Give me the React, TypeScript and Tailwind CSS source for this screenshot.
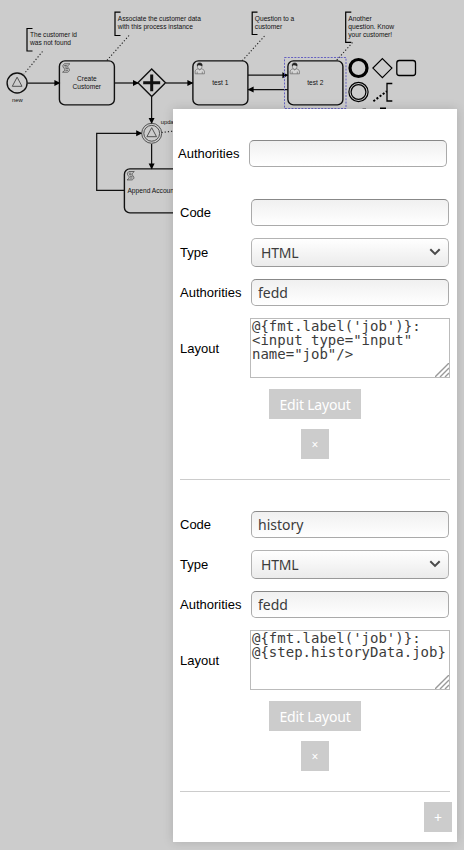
import React from "react";

function Lines({ x, y, lines, anchor = "start", size = 6.9 }: { x: number; y: number; lines: [string, number][]; anchor?: "start" | "middle"; size?: number }) {
  return (
    <g fill="#111" fontSize={size} textAnchor={anchor}>
      {lines.map(([line, width], i) => (
        <text key={line} x={x} y={y + i * 8} textLength={width} lengthAdjust="spacingAndGlyphs">
          {line}
        </text>
      ))}
    </g>
  );
}

function Script({ x, y }: { x: number; y: number }) {
  return (
    <g transform={`translate(${x} ${y})`} fill="none" stroke="#444" strokeWidth="0.75">
      <path d="M2.3 .5H7.6C6.2 1.6 5.4 2.5 5.5 3.4 5.6 4.7 7.4 5.3 7.2 6.9 7.1 7.8 6.3 8.4 5.4 8.9H.4C1.6 8 2.6 7.3 2.5 6.3 2.4 5 .7 4.4.7 2.8.7 1.8 1.3 1.1 2.3.5Z" />
      <path d="M2 2.2H4.6M2.3 3.7H4.8M3.2 5.3H5.9M3.2 7H5.9" />
    </g>
  );
}

function User({ x, y }: { x: number; y: number }) {
  return (
    <g transform={`translate(${x} ${y})`} stroke="#555" strokeWidth="0.6" fill="#d6d6d6">
      <path d="M.4 11V8.3C.7 6.9 2 6.4 3.3 6L4.8 7.1 6.4 6C8 6.4 9.4 7.1 9.6 8.3V11ZM2.4 10.9V8.8M7.5 10.9V8.8" />
      <path d="M2.6 3.3C2.6 5 3.6 6.6 4.9 6.6S7.2 5 7.2 3.3C7.2 1.6 6.2.6 4.9.6S2.6 1.6 2.6 3.3Z" />
      <path d="M2.6 3.1C2.1.9 3.4.2 4.9.2S7.7.9 7.2 3.1C6.2 2 5 2.8 3.8 2.1Z" fill="#222" stroke="#222" />
    </g>
  );
}

function Diagram() {
  return (
    <svg width="464" height="850" viewBox="0 0 464 850" className="block font-['Liberation_Sans',Arial,sans-serif]">
      <defs>
        <marker id="arrow" markerUnits="userSpaceOnUse" markerWidth="7" markerHeight="7" refX="5.6" refY="3" orient="auto">
          <path d="M0 0 6 3 0 6Z" />
        </marker>
      </defs>

      <g fill="none" stroke="#000" strokeWidth="1.2">
        <path d="M32.5 28.5H27V51H32.5" />
        <path d="M120.5 12.2H115V35.5H120.5" />
        <path d="M257.5 12.2H252.2V34.5H257.5" />
        <path d="M351.3 12.2H345.7V42.3H351.3" />
      </g>
      <g fill="none" stroke="#222" strokeWidth="1.1" strokeDasharray="1.2 2">
        <path d="M42.5 51.5 24 74" />
        <path d="M129 35.5 106 61.5" />
        <path d="M264.5 36 242 61" />
        <path d="M352.5 42.5 336 61" />
        <path d="M161.5 132.5 174 131" />
      </g>
      <Lines x={30} y={36.9} lines={[["The customer id", 47], ["was not found", 41]]} />
      <Lines x={117.8} y={21} lines={[["Associate the customer data", 83], ["with this process instance", 75]]} />
      <Lines x={254.8} y={21} lines={[["Question to a", 39.5], ["customer", 27.5]]} />
      <Lines x={348.2} y={21} lines={[["Another", 23.5], ["question. Know", 46], ["your customer!", 44]]} />

      <g fill="none" stroke="#111" strokeWidth="1.25" markerEnd="url(#arrow)">
        <path d="M27.5 83H60" />
        <path d="M115 83H138.5" />
        <path d="M166 83H193" />
        <path d="M248 75.2H288" />
        <path d="M288 89.5H248" />
        <path d="M151.6 97V123.5" />
        <path d="M151.6 144V169" />
        <path d="M124 190.3H96.7V133.3H141.8" />
      </g>

      <g fill="none" stroke="#111" strokeWidth="1.4">
        <rect x="59.4" y="60.9" width="55" height="44" rx="5.5" />
        <rect x="192.9" y="60.9" width="55" height="44" rx="5.5" />
        <rect x="287.9" y="60.9" width="55" height="44" rx="5.5" />
        <rect x="124.4" y="168.9" width="55" height="44" rx="5.5" />
        <circle cx="17.1" cy="83" r="10" />
        <path d="M151.7 69 165.5 82.8 151.7 96.6 137.9 82.8Z" />
        <path d="M151.7 74.5V91.3M143.2 82.8H160.2" strokeWidth="3" />
      </g>
      <g fill="none" stroke="#444" strokeWidth="0.9">
        <path d="M17.1 77.2 22 86.3H12.3Z" />
        <circle cx="151.7" cy="133.3" r="10" />
        <circle cx="151.7" cy="133.3" r="7.9" />
        <path d="M151.7 127.7 156.5 136.7H146.9Z" />
      </g>
      <rect x="284.5" y="57.5" width="61.5" height="51" fill="none" stroke="#6460c0" strokeDasharray="2 1.3" />
      <Script x={62.2} y={63.3} />
      <Script x={126.7} y={171} />
      <User x={194.8} y={62.8} />
      <User x={289.8} y={62.8} />
      <Lines x={86.8} y={81} anchor="middle" lines={[["Create", 19.5], ["Customer", 28.5]]} />
      <Lines x={220.3} y={85} anchor="middle" lines={[["test 1", 16.2]]} />
      <Lines x={315.3} y={85} anchor="middle" lines={[["test 2", 16.2]]} />
      <Lines x={17.3} y={102} anchor="middle" size={6} lines={[["new", 10.7]]} />
      <Lines x={160.7} y={124.2} size={6} lines={[["updated", 21]]} />
      <Lines x={127.4} y={193} lines={[["Append Account", 48.5]]} />

      <g fill="none" stroke="#000">
        <circle cx="358.5" cy="68" r="8.5" strokeWidth="3.2" />
        <path d="M382.4 58.6 391.9 68.1 382.4 77.6 372.9 68.1Z" strokeWidth="1.2" />
        <rect x="396.8" y="60.5" width="18.7" height="15" rx="2.5" strokeWidth="1.3" />
        <circle cx="358.5" cy="92" r="9.6" strokeWidth="1.2" />
        <circle cx="358.5" cy="92" r="7.4" strokeWidth="1.2" />
        <path d="M373.4 101.2 386.8 91.2" strokeWidth="2" strokeDasharray="2.1 1.8" />
        <path d="M392.3 83.5H387V101H392.3" strokeWidth="1.3" />
        <path d="M380 108.3H386" strokeWidth="1.6" />
        <path d="M362.5 108.5H366" stroke="#888" />
      </g>
    </svg>
  );
}

const inputStyle = "block h-[27px] w-[198px] rounded-[5px] border border-[#aaa] border-t-[#888] bg-linear-to-b from-[#f0f0f0] to-white px-[6px] font-['Noto_Sans','Open_Sans',sans-serif] text-[14px] leading-[25px] text-[#3c3c3c] outline-none";
const buttonStyle = "flex h-[30px] items-center justify-center bg-[#cccccc] font-['Noto_Sans','Open_Sans',sans-serif] text-white";

function Field({ label, children }: { label: string; children: React.ReactNode }) {
  return (
    <div className="flex items-center">
      <span className="w-[71px] shrink-0">{label}</span>
      {children}
    </div>
  );
}

function FormSection({ code, layout }: { code: string; layout: string }) {
  return (
    <section className="flex h-[281px] w-[270px] flex-col border-b border-[#cccccc]">
      <Field label="Code">
        <input className={inputStyle} defaultValue={code} />
      </Field>
      <div className="mt-3">
        <Field label="Type">
          <div className="flex h-[29px] w-[198px] items-center justify-between rounded-[5px] border border-[#b3b3b3] border-b-[#999] bg-linear-to-b from-white to-[#ebebeb] pr-[7px] pl-[9px] font-['Noto_Sans','Open_Sans',sans-serif] text-[14px] text-[#3c3c3c]">
            <span className="tracking-[-0.2px]">HTML</span>
            <svg width="12" height="8" viewBox="0 0 12 8" fill="none" stroke="#4a4a4a" strokeWidth="2" className="-mt-[2px]">
              <path d="M1.3 1.2 6 5.9 10.7 1.2" />
            </svg>
          </div>
        </Field>
      </div>
      <div className="mt-3">
        <Field label="Authorities">
          <input className={inputStyle} defaultValue="fedd" />
        </Field>
      </div>
      <div className="mt-3 flex items-center">
        <span className="w-[70px] shrink-0">Layout</span>
        <div className="relative h-[60px] w-[200px] border border-[#bbb] px-px font-['DejaVu_Sans_Mono',monospace] text-[14px] leading-[14px] whitespace-pre text-[#3c3c3c]">
          {layout}
          <svg className="absolute right-0 bottom-0" width="14" height="14" viewBox="0 0 14 14" fill="none" stroke="#999" strokeWidth="1.4">
            <path d="M0 14 14 0M5 14 14 5M10 14 14 10" />
          </svg>
        </div>
      </div>
      <button className={`${buttonStyle} mt-[11px] w-[92px] self-center text-[14px]`}>
        <span className="tracking-[-0.2px]">Edit Layout</span>
      </button>
      <button className={`${buttonStyle} mt-[10px] w-[28px] self-center text-[12px]`}>×</button>
    </section>
  );
}

export default function App() {
  return (
    <main className="relative h-[850px] w-[464px] overflow-hidden bg-[#cccccc]">
      <Diagram />
      <aside className="absolute top-[109px] left-[173px] flex h-[733px] w-[284px] flex-col bg-white pl-[7px] font-['Liberation_Sans',Arial,sans-serif] text-[13px] leading-[15px] text-black shadow-[0_0_10px_rgba(0,0,0,0.15)]">
        <div className="-ml-[2px] pt-[31px] pb-[32px]">
          <Field label="Authorities">
            <input className={inputStyle} />
          </Field>
        </div>
        <FormSection code="" layout={`@{fmt.label('job')}:\n<input type="input"\nname="job"/>`} />
        <div className="mt-[31px]">
          <FormSection code="history" layout={`@{fmt.label('job')}:\n@{step.historyData.job}`} />
        </div>
        <button className={`${buttonStyle} mt-[10px] mr-[5px] w-[28px] self-end text-[14px]`}>+</button>
      </aside>
    </main>
  );
}
